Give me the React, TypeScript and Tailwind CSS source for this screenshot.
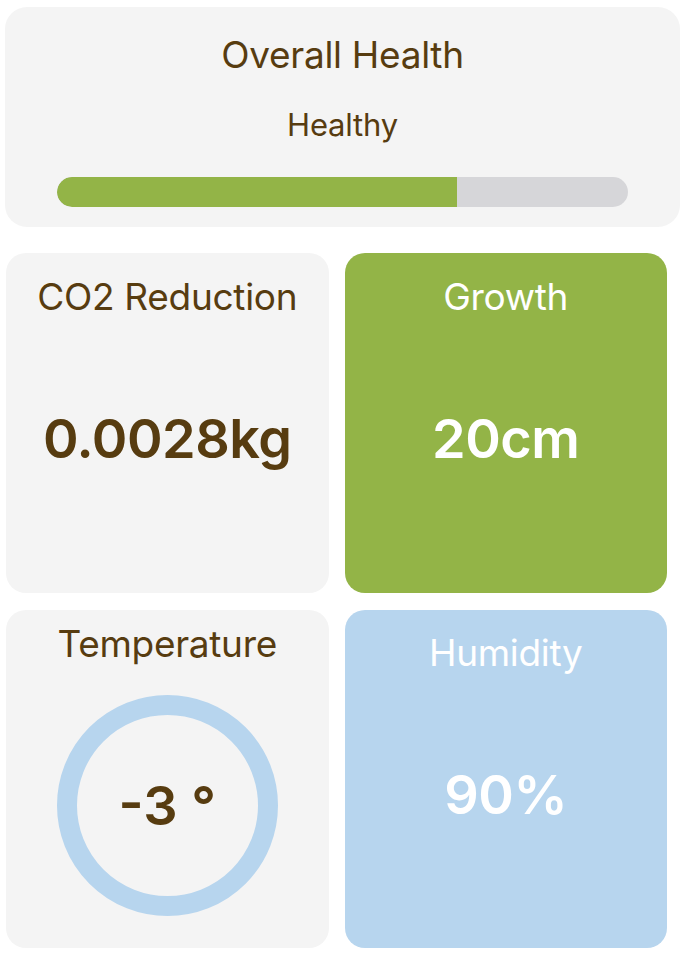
import React from 'react';

const brown = 'text-[#573c10]';

const StatCard: React.FC<{
  title: string;
  value: string;
  tone: 'gray' | 'green' | 'blue';
  titleTop: string;
  valueGap: string;
}> = ({ title, value, tone, titleTop, valueGap }) => {
  const bg = tone === 'gray' ? 'bg-[#f4f4f4]' : tone === 'green' ? 'bg-[#93b447]' : 'bg-[#b7d5ee]';
  const color = tone === 'gray' ? brown : 'text-white';
  return (
    <div className={`${bg} rounded-[20px] flex flex-col items-center ${titleTop}`}>
      <div className={`text-[37px] leading-[40px] tracking-[-0.3px] ${color}`}>{title}</div>
      <div className={`${valueGap} text-[54px] leading-[60px] font-semibold tracking-[-0.5px] ${color}`}>{value}</div>
    </div>
  );
};

export default function App() {
  const health = 70;
  return (
    <div className="w-[688px] h-[970px] bg-white px-[5px] pt-[7px]" style={{ fontFamily: 'Inter, "Noto Sans", sans-serif' }}>
      {/* overall health */}
      <div className="w-[675px] h-[220px] bg-[#f4f4f4] rounded-[22px] flex flex-col items-center pt-[28px] px-[52px]">
        <div className={`text-[37px] leading-[40px] tracking-[-0.3px] ${brown}`}>Overall Health</div>
        <div className={`mt-[33px] text-[31px] leading-[34px] tracking-[-0.2px] ${brown}`}>Healthy</div>
        <div className="mt-[35px] w-full h-[30px] rounded-full bg-[#d6d6d9] overflow-hidden">
          <div className="h-full bg-[#93b447] rounded-l-full" style={{ width: `${health}%` }} />
        </div>
      </div>

      <div className="w-[661px] ml-[1px] mt-[26px] grid grid-cols-2 gap-x-[16px] gap-y-[17px]">
        <div className="h-[340px]">
          <StatCard title="CO2 Reduction" value="0.0028kg" tone="gray" titleTop="pt-[24px] h-full" valueGap="mt-[92px]" />
        </div>
        <div className="h-[340px]">
          <StatCard title="Growth" value="20cm" tone="green" titleTop="pt-[24px] h-full" valueGap="mt-[92px]" />
        </div>

        {/* temperature */}
        <div className="h-[338px] bg-[#f4f4f4] rounded-[20px] flex flex-col items-center pt-[14px]">
          <div className={`text-[37px] leading-[40px] tracking-[-0.3px] ${brown}`}>Temperature</div>
          <div className="mt-[31px] w-[221px] h-[221px] rounded-full border-[20px] border-[#b7d5ee] flex items-center justify-center">
            <span className={`text-[54px] leading-[60px] font-semibold ${brown}`}>-3 °</span>
          </div>
        </div>

        <div className="h-[338px]">
          <StatCard title="Humidity" value="90%" tone="blue" titleTop="pt-[23px] h-full" valueGap="mt-[92px]" />
        </div>
      </div>
    </div>
  );
}
